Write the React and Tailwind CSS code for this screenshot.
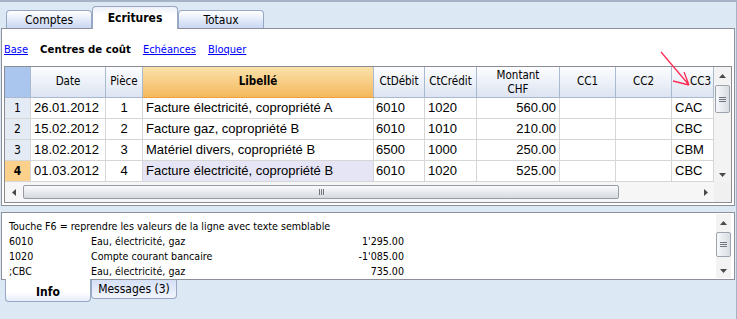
import React from "react";

const rows = [
  { n: "1", date: "26.01.2012", piece: "1", lib: "Facture électricité, copropriété A", deb: "6010", cred: "1020", mont: "560.00", cc3: "CAC" },
  { n: "2", date: "15.02.2012", piece: "2", lib: "Facture gaz, copropriété B", deb: "6010", cred: "1010", mont: "210.00", cc3: "CBC" },
  { n: "3", date: "18.02.2012", piece: "3", lib: "Matériel divers, copropriété B", deb: "6500", cred: "1000", mont: "250.00", cc3: "CBM" },
  { n: "4", date: "01.03.2012", piece: "4", lib: "Facture électricité, copropriété B", deb: "6010", cred: "1020", mont: "525.00", cc3: "CBC", current: true },
];

const infoRows = [
  ["6010", "Eau, électricité, gaz", "1'295.00"],
  ["1020", "Compte courant bancaire", "-1'085.00"],
  [";CBC", "Eau, électricité, gaz", "735.00"],
];

function Arrow({ dir }) {
  const d = {
    up: "M0 4 L3.5 0 L7 4 Z",
    down: "M0 0 L7 0 L3.5 4 Z",
    left: "M4 0 L4 7 L0 3.5 Z",
    right: "M0 0 L4 3.5 L0 7 Z",
  }[dir];
  const vert = dir === "up" || dir === "down";
  return (
    <svg width={vert ? 7 : 4} height={vert ? 4 : 7} viewBox={vert ? "0 0 7 4" : "0 0 4 7"}>
      <path d={d} fill="#4a4a4a" />
    </svg>
  );
}

function VThumb({ h }) {
  return (
    <div
      className="mx-[1px] w-[15px] rounded-[2px] border border-[#9ea4ad] bg-gradient-to-r from-[#f7f8fa] to-[#d9dde3] flex flex-col items-center justify-center gap-[1px]"
      style={{ height: h }}
    >
      <div className="w-[7px] h-px bg-[#6f7680]" />
      <div className="w-[7px] h-px bg-[#6f7680]" />
      <div className="w-[7px] h-px bg-[#6f7680]" />
    </div>
  );
}

export default function App() {
  return (
    <div className="relative w-[737px] h-[319px] overflow-hidden bg-[#dde8f5] border-t-2 border-r border-[#a6b3c6] font-['DejaVu_Sans_Condensed','Liberation_Sans',sans-serif] text-black">
      {/* top tabs */}
      <div className="flex items-end h-[26px] pl-[6px]">
        <div className="w-[86px] h-[18px] rounded-t-[4px] border border-b-0 border-[#97a7c4] bg-gradient-to-b from-white to-[#c9d7f3] flex items-center justify-center text-[12px]">
          Comptes
        </div>
        <div className="relative z-10 -mb-px w-[86px] h-[23px] rounded-t-[4px] border border-b-0 border-[#97a7c4] bg-gradient-to-b from-[#eef1fb] to-white to-40% flex items-center justify-center text-[12px] font-bold">
          Ecritures
        </div>
        <div className="w-[86px] h-[18px] rounded-t-[4px] border border-b-0 border-[#97a7c4] bg-gradient-to-b from-white to-[#c9d7f3] flex items-center justify-center text-[12px]">
          Totaux
        </div>
      </div>

      {/* main panel */}
      <div className="ml-[1px] w-[734px] h-[178px] border border-[#8d8f99] bg-white">
        <div className="h-[37px] pl-[2px] pt-[5px] flex items-center gap-[12px] text-[11px]">
          <span className="text-[#0000ff] underline">Base</span>
          <span className="font-bold text-[11.3px]">Centres de coût</span>
          <span className="text-[#0000ff] underline">Echéances</span>
          <span className="text-[#0000ff] underline">Bloquer</span>
        </div>

        <div className="ml-[2px] w-[728px] h-[137px] border border-[#8b8c93] flex flex-col">
          <div className="flex h-[115px]">
            <div className="grid grid-cols-[26px_75px_37px_231px_51px_52px_83px_56px_56px_42px] grid-rows-[31px_21px_21px_21px_21px] w-[709px]">
              {/* header */}
              <div className="border-r border-b border-[#a9b9cf] bg-[#abc6ee]" />
              <div className="border-r border-b border-[#a9b9cf] bg-gradient-to-b from-[#fcfdff] to-[#dde4f1] flex items-center justify-center text-[11.5px]">Date</div>
              <div className="border-r border-b border-[#a9b9cf] bg-gradient-to-b from-[#fcfdff] to-[#dde4f1] flex items-center justify-center text-[11.5px]">Pièce</div>
              <div className="border-r border-b border-r-[#a9b9cf] border-b-[#f0a23a] bg-gradient-to-b from-[#fae2aa] to-[#f5b85b] flex items-center justify-center text-[11.5px] font-bold">Libellé</div>
              <div className="border-r border-b border-[#a9b9cf] bg-gradient-to-b from-[#fcfdff] to-[#dde4f1] flex items-center justify-center text-[11.5px]">CtDébit</div>
              <div className="border-r border-b border-[#a9b9cf] bg-gradient-to-b from-[#fcfdff] to-[#dde4f1] flex items-center justify-center text-[11.5px]">CtCrédit</div>
              <div className="border-r border-b border-[#a9b9cf] bg-gradient-to-b from-[#fcfdff] to-[#dde4f1] flex flex-col items-center justify-center text-[11.5px] leading-[14px]">
                <span>Montant</span>
                <span>CHF</span>
              </div>
              <div className="border-r border-b border-[#a9b9cf] bg-gradient-to-b from-[#fcfdff] to-[#dde4f1] flex items-center justify-center text-[11.5px]">CC1</div>
              <div className="border-r border-b border-[#a9b9cf] bg-gradient-to-b from-[#fcfdff] to-[#dde4f1] flex items-center justify-center text-[11.5px]">CC2</div>
              <div className="border-r border-b border-[#a9b9cf] bg-gradient-to-b from-[#fcfdff] to-[#dde4f1] flex items-center justify-end pr-[2px] text-[11.5px]">CC3</div>

              {/* body */}
              {rows.map((r) => (
                <React.Fragment key={r.n}>
                  <div className={r.current ? "border-r border-b border-[#d6d6d6] bg-[#fbd18c] flex items-center justify-center text-[12px] font-bold" : "border-r border-b border-[#d6d6d6] bg-[#e4ebf5] flex items-center justify-center text-[12px]"}>
                    {r.n}
                  </div>
                  <div className="border-r border-b border-[#d6d6d6] pl-[3px] flex items-center font-['Liberation_Sans',sans-serif] text-[13px]">{r.date}</div>
                  <div className="border-r border-b border-[#d6d6d6] flex items-center justify-center font-['Liberation_Sans',sans-serif] text-[13px]">{r.piece}</div>
                  <div className={r.current ? "border-r border-b border-[#d6d6d6] bg-[#e5e5f5] pl-[3px] flex items-center font-['Liberation_Sans',sans-serif] text-[13px] whitespace-nowrap" : "border-r border-b border-[#d6d6d6] pl-[3px] flex items-center font-['Liberation_Sans',sans-serif] text-[13px] whitespace-nowrap"}>
                    {r.lib}
                  </div>
                  <div className="border-r border-b border-[#d6d6d6] pl-[2px] flex items-center font-['Liberation_Sans',sans-serif] text-[13px]">{r.deb}</div>
                  <div className="border-r border-b border-[#d6d6d6] pl-[3px] flex items-center font-['Liberation_Sans',sans-serif] text-[13px]">{r.cred}</div>
                  <div className="border-r border-b border-[#d6d6d6] pr-[3px] flex items-center justify-end font-['Liberation_Sans',sans-serif] text-[13px]">{r.mont}</div>
                  <div className="border-r border-b border-[#d6d6d6]" />
                  <div className="border-r border-b border-[#d6d6d6]" />
                  <div className="border-r border-b border-[#d6d6d6] pl-[3px] flex items-center font-['Liberation_Sans',sans-serif] text-[13px]">{r.cc3}</div>
                </React.Fragment>
              ))}
            </div>

            {/* vertical scrollbar */}
            <div className="w-[17px] h-full bg-[#f3f3f3] flex flex-col">
              <div className="h-[18px] flex items-center justify-center">
                <Arrow dir="up" />
              </div>
              <VThumb h={28} />
              <div className="flex-1" />
              <div className="h-[15px] flex items-center justify-center">
                <Arrow dir="down" />
              </div>
            </div>
          </div>

          {/* horizontal scrollbar */}
          <div className="flex h-[20px]">
            <div className="w-[709px] bg-[#f6f6f6] flex items-center">
              <div className="w-[18px] h-full flex items-center justify-center">
                <Arrow dir="left" />
              </div>
              <div className="w-[596px] h-[14px] rounded-[2px] border border-[#969ca6] bg-gradient-to-b from-[#fbfbfc] to-[#d6dae0] flex items-center justify-center gap-[1px]">
                <div className="w-px h-[6px] bg-[#6f7680]" />
                <div className="w-px h-[6px] bg-[#6f7680]" />
                <div className="w-px h-[6px] bg-[#6f7680]" />
              </div>
              <div className="flex-1" />
              <div className="w-[17px] h-full flex items-center justify-center">
                <Arrow dir="right" />
              </div>
            </div>
            <div className="w-[17px] bg-[#f0f0f0]" />
          </div>
        </div>
      </div>

      {/* info panel */}
      <div className="mt-[6px] ml-[1px] w-[734px] h-[68px] border border-[#8d8f99] bg-white flex">
        <div className="flex-1 pl-[7px] pt-[6px] text-[10.6px] leading-[15px]">
          <div>Touche F6 = reprendre les valeurs de la ligne avec texte semblable</div>
          {infoRows.map((r) => (
            <div key={r[0]} className="grid grid-cols-[82px_200px_113px]">
              <span>{r[0]}</span>
              <span>{r[1]}</span>
              <span className="text-right">{r[2]}</span>
            </div>
          ))}
        </div>
        <div className="w-[15px] mr-[3px] my-[1px] bg-[#f3f3f3] flex flex-col">
          <div className="h-[18px] flex items-center justify-center">
            <Arrow dir="up" />
          </div>
          <div className="w-[15px] h-[25px] rounded-[2px] border border-[#9ea4ad] bg-gradient-to-r from-[#f7f8fa] to-[#d9dde3] flex flex-col items-center justify-center gap-[1px]">
            <div className="w-[7px] h-px bg-[#6f7680]" />
            <div className="w-[7px] h-px bg-[#6f7680]" />
            <div className="w-[7px] h-px bg-[#6f7680]" />
          </div>
          <div className="flex-1" />
          <div className="h-[14px] flex items-center justify-center">
            <Arrow dir="down" />
          </div>
        </div>
      </div>

      {/* bottom tabs */}
      <div className="flex items-start pl-[5px]">
        <div className="relative z-10 -mt-px w-[86px] h-[23px] rounded-b-[4px] border border-t-0 border-[#97a7c4] bg-gradient-to-b from-white from-60% to-[#e6ecf9] flex items-center justify-center pt-[3px] text-[12px] font-bold">
          Info
        </div>
        <div className="w-[86px] h-[19px] rounded-b-[4px] border border-t-0 border-[#97a7c4] bg-gradient-to-b from-[#d5e0f7] to-[#f1f5fd] flex items-center justify-center text-[12px]">
          Messages (3)
        </div>
      </div>

      {/* red annotation arrow */}
      <svg className="absolute left-0 top-0 pointer-events-none" width="737" height="319" viewBox="0 0 737 319">
        <path d="M661 50 L689 83 M689 83 L673 79 M689 83 L684 70" stroke="#ff2d55" strokeWidth="1.3" fill="none" />
      </svg>
    </div>
  );
}
